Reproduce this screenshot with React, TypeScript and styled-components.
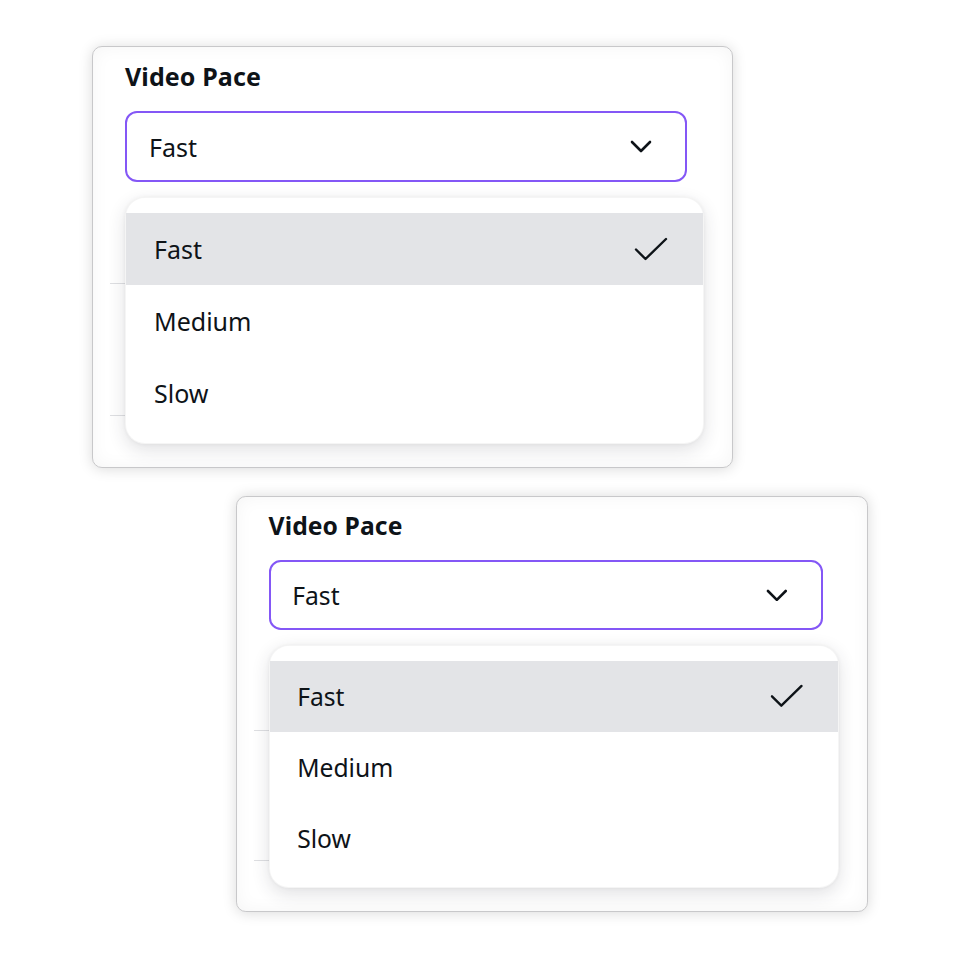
import React from "react";
import styled, { createGlobalStyle } from "styled-components";

const GlobalStyle = createGlobalStyle`
  html, body {
    margin: 0;
    padding: 0;
    background: #ffffff;
  }
  body {
    font-family: "Noto Sans", "Open Sans", Arial, sans-serif;
    color: #0e1318;
  }
`;

const PACES = ["Fast", "Medium", "Slow"];

const Page = styled.div`
  display: flex;
  flex-direction: column;
  gap: 28px;
  padding-top: 46px;
  width: 960px;
  height: 960px;
  box-sizing: border-box;
`;

const Slot = styled.div<{ $left: number }>`
  padding-left: ${(p) => p.$left}px;
`;

const Card = styled.div<{ $zoom: number }>`
  zoom: ${(p) => p.$zoom};
  position: relative;
  width: 641px;
  height: 422px;
  box-sizing: border-box;
  padding: 13px 45px 0 32px;
  background: #ffffff;
  border: 1px solid #c8c8ca;
  border-radius: 10px;
  box-shadow: 0 1px 14px rgba(0, 0, 0, 0.15), inset 0 0 18px rgba(0, 0, 0, 0.045);
`;

const Label = styled.div`
  font-size: 25px;
  line-height: 32px;
  font-weight: 700;
  letter-spacing: 0.1px;
  margin-bottom: 19px;
`;

const Field = styled.div`
  position: relative;
`;

const Trigger = styled.div`
  display: flex;
  align-items: center;
  justify-content: space-between;
  height: 71px;
  box-sizing: border-box;
  padding: 0 33px 0 22px;
  border: 2.1px solid #8457f6;
  border-radius: 12px;
  font-size: 25px;
  background: #ffffff;
`;

const Behind = styled.div<{ $h: number }>`
  height: ${(p) => p.$h}px;
  margin-left: -15px;
  border-bottom: 1px solid #dedfe2;
`;

const Menu = styled.div`
  position: absolute;
  top: calc(100% + 15px);
  left: 0;
  width: 577px;
  padding: 15px 0 14px;
  background: #ffffff;
  border-radius: 20px;
  border: 1px solid rgba(0, 0, 0, 0.04);
  box-shadow: 0 6px 18px rgba(40, 45, 60, 0.14), 0 0 4px rgba(0, 0, 0, 0.05);
  z-index: 2;
`;

const Option = styled.div<{ $active?: boolean }>`
  display: flex;
  align-items: center;
  justify-content: space-between;
  height: 72px;
  padding: 0 35px 0 28px;
  font-size: 25px;
  background: ${(p) => (p.$active ? "#e3e4e7" : "transparent")};
`;

const Chevron = () => (
  <svg width="22" height="13" viewBox="0 0 22 13" fill="none">
    <path d="M2 2 L11 11 L20 2" stroke="#0e1318" strokeWidth="2.6" strokeLinecap="round" strokeLinejoin="round" />
  </svg>
);

const Check = () => (
  <svg width="34" height="24" viewBox="0 0 34 24" fill="none">
    <path d="M2 12.5 L11.5 22 L32 2" stroke="#0e1318" strokeWidth="2.4" strokeLinecap="round" strokeLinejoin="round" />
  </svg>
);

const PaceCard: React.FC<{ zoom: number }> = ({ zoom }) => (
  <Card $zoom={zoom}>
    <Label>Video Pace</Label>
    <Field>
      <Trigger>
        <span>Fast</span>
        <Chevron />
      </Trigger>
      <Menu>
        {PACES.map((p) => (
          <Option key={p} $active={p === "Fast"}>
            <span>{p}</span>
            {p === "Fast" && <Check />}
          </Option>
        ))}
      </Menu>
    </Field>
    {/* settings rows hidden under the open menu */}
    <Behind $h={101} />
    <Behind $h={131} />
  </Card>
);

export default function App() {
  return (
    <>
      <GlobalStyle />
      <Page>
        <Slot $left={92}>
          <PaceCard zoom={1} />
        </Slot>
        <Slot $left={236}>
          <PaceCard zoom={0.986} />
        </Slot>
      </Page>
    </>
  );
}
